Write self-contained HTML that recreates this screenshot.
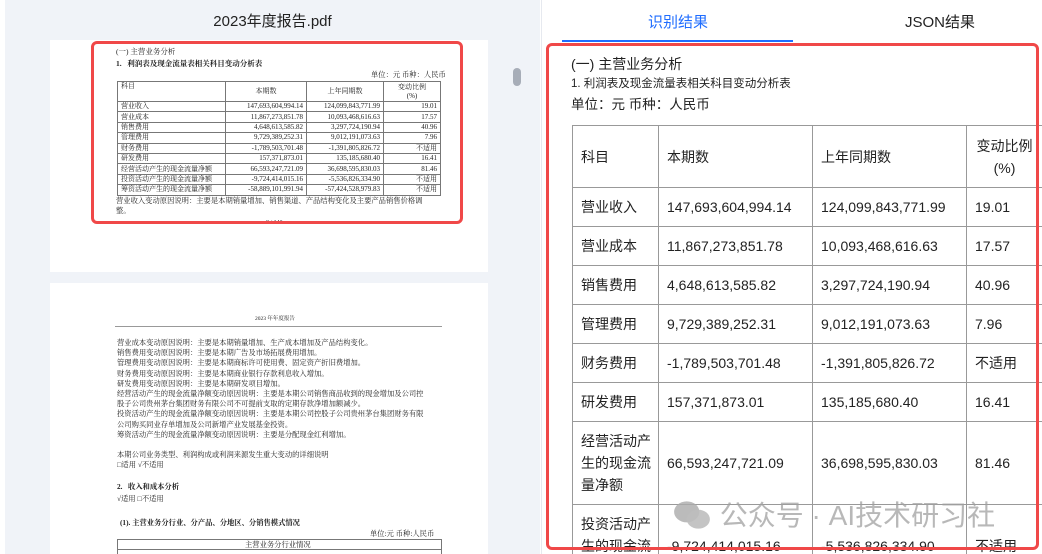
<!DOCTYPE html>
<html><head><meta charset="utf-8"><style>
*{margin:0;padding:0;box-sizing:border-box}
html,body{width:1042px;height:554px;overflow:hidden}
body{background:#fff;font-family:"Liberation Sans","Noto Sans CJK SC",sans-serif}
#wrap{position:relative;width:1042px;height:554px;overflow:hidden}
.left{position:absolute;left:5px;top:0;width:535px;height:554px;background:#f0f3f8;overflow:hidden}
.title{position:absolute;left:0;width:535px;top:10px;text-align:center;font-size:15px;color:#222}
.page{position:absolute;left:45px;width:438px;background:#fff;font-family:"Liberation Serif","Noto Serif CJK SC",serif;color:#222;overflow:hidden}
.p1{top:40px;height:232px}
.p2{top:283px;height:271px}
.pt{position:absolute;font-size:7.3px;white-space:nowrap}
.small{border-collapse:collapse;position:absolute;left:67px;top:41px;width:323px;font-size:7px;table-layout:fixed}
.small td{border:0.6px solid #777;padding:0 3px;height:10.4px;line-height:9px;white-space:nowrap;overflow:hidden}
.small td.r{text-align:right}
.red{position:absolute;border:3px solid #f04848;border-radius:6px}
.sb{position:absolute;left:508px;top:68px;width:8px;height:18px;border-radius:4px;background:#a7adb8}
.right{position:absolute;left:541px;top:0;width:501px;height:554px;background:#fff;border-left:1px solid #e6e9ef}
.tab{position:absolute;top:11px;font-size:15px}
.tbox{position:absolute;left:572px;top:125px;width:470px;height:429px;overflow:hidden}
.big{border-collapse:collapse;position:absolute;left:0;top:0;font-size:14px;color:#222;table-layout:fixed;width:490px}
.big td{border:1px solid #999;padding:0 8px;vertical-align:middle;line-height:22px;white-space:nowrap;overflow:hidden}
</style></head><body><div id="wrap">
<div class="left">
<div class="title">2023年度报告.pdf</div>
<div class="page p1">
<div class="pt" style="left:66px;top:6px;font-size:7.5px">(一) 主营业务分析</div>
<div class="pt" style="left:66px;top:18px;font-size:7.5px;font-weight:bold">1.&nbsp;&nbsp;&nbsp;利润表及现金流量表相关科目变动分析表</div>
<div class="pt" style="left:321px;top:30px">单位：元 币种：人民币</div>
<table class="small">
<col style="width:108px"><col style="width:81px"><col style="width:77px"><col style="width:57px">
<tr><td style="height:20px;vertical-align:top">科目</td><td style="text-align:center">本期数</td><td style="text-align:center">上年同期数</td><td style="text-align:center;line-height:9px">变动比例<br>(%)</td></tr>
<tr><td>营业收入</td><td class="r">147,693,604,994.14</td><td class="r">124,099,843,771.99</td><td class="r">19.01</td></tr>
<tr><td>营业成本</td><td class="r">11,867,273,851.78</td><td class="r">10,093,468,616.63</td><td class="r">17.57</td></tr>
<tr><td>销售费用</td><td class="r">4,648,613,585.82</td><td class="r">3,297,724,190.94</td><td class="r">40.96</td></tr>
<tr><td>管理费用</td><td class="r">9,729,389,252.31</td><td class="r">9,012,191,073.63</td><td class="r">7.96</td></tr>
<tr><td>财务费用</td><td class="r">-1,789,503,701.48</td><td class="r">-1,391,805,826.72</td><td class="r">不适用</td></tr>
<tr><td>研发费用</td><td class="r">157,371,873.01</td><td class="r">135,185,680.40</td><td class="r">16.41</td></tr>
<tr><td>经营活动产生的现金流量净额</td><td class="r">66,593,247,721.09</td><td class="r">36,698,595,830.03</td><td class="r">81.46</td></tr>
<tr><td>投资活动产生的现金流量净额</td><td class="r">-9,724,414,015.16</td><td class="r">-5,536,826,334.90</td><td class="r">不适用</td></tr>
<tr><td>筹资活动产生的现金流量净额</td><td class="r">-58,889,101,991.94</td><td class="r">-57,424,528,979.83</td><td class="r">不适用</td></tr>
</table>
<div class="pt" style="left:66px;top:156px">营业收入变动原因说明：主要是本期销量增加、销售渠道、产品结构变化及主要产品销售价格调</div>
<div class="pt" style="left:66px;top:166px">整。</div>
<div class="pt" style="left:216px;top:180px;font-size:6px">8 / 143</div>
</div>
<div class="page p2">
<div class="pt" style="left:205px;top:31px;font-size:5.5px">2023 年年度报告</div>
<div style="position:absolute;left:65px;top:43px;width:327px;height:1px;background:#999"></div>
<div class="pt" style="left:67px;top:55px;line-height:10.2px">营业成本变动原因说明：主要是本期销量增加、生产成本增加及产品结构变化。<br>销售费用变动原因说明：主要是本期广告及市场拓展费用增加。<br>管理费用变动原因说明：主要是本期商标许可使用费、固定资产折旧费增加。<br>财务费用变动原因说明：主要是本期商业银行存款利息收入增加。<br>研发费用变动原因说明：主要是本期研发项目增加。<br>经营活动产生的现金流量净额变动原因说明：主要是本期公司销售商品收到的现金增加及公司控<br>股子公司贵州茅台集团财务有限公司不可提前支取的定期存款净增加额减少。<br>投资活动产生的现金流量净额变动原因说明：主要是本期公司控股子公司贵州茅台集团财务有限<br>公司购买同业存单增加及公司新增产业发展基金投资。<br>筹资活动产生的现金流量净额变动原因说明：主要是分配现金红利增加。</div>
<div class="pt" style="left:67px;top:167px;line-height:10.2px">本期公司业务类型、利润构成或利润来源发生重大变动的详细说明<br>□适用 √不适用</div>
<div class="pt" style="left:67px;top:199px;font-weight:bold">2.&nbsp;&nbsp;&nbsp;收入和成本分析</div>
<div class="pt" style="left:67px;top:211px">√适用 □不适用</div>
<div class="pt" style="left:70px;top:235px;font-weight:bold">(1). 主营业务分行业、分产品、分地区、分销售模式情况</div>
<div class="pt" style="left:320px;top:246px">单位:元 币种:人民币</div>
<div style="position:absolute;left:67px;top:256px;width:325px;height:30px;border:0.6px solid #777"></div>
<div class="pt" style="left:195px;top:257px">主营业务分行业情况</div>
<div style="position:absolute;left:67px;top:266px;width:325px;height:1px;background:#777"></div>
</div>
<div class="sb"></div>
</div>
<div class="red" style="left:91px;top:41px;width:372px;height:183px"></div>
<div class="right">
<div class="tab" style="left:106px;color:#1f6dff">识别结果</div>
<div style="position:absolute;left:20px;top:40px;width:231px;height:2px;background:#1f6dff"></div>
<div class="tab" style="left:363px;color:#222">JSON结果</div>
</div>
<div style="position:absolute;left:571px;top:54px;font-size:14px;color:#222">(一) 主营业务分析</div>
<div style="position:absolute;left:571px;top:75px;font-size:11.5px;color:#222">1. 利润表及现金流量表相关科目变动分析表</div>
<div style="position:absolute;left:571px;top:93px;font-size:13.5px;color:#222">单位：元 币种：人民币</div>
<div class="tbox">
<table class="big">
<col style="width:86px"><col style="width:154px"><col style="width:154px"><col style="width:96px">
<tr><td style="height:62px">科目</td><td>本期数</td><td>上年同期数</td><td style="text-align:center;padding:0 20px 0 0">变动比例<br>(%)</td></tr>
<tr><td style="height:39px">营业收入</td><td>147,693,604,994.14</td><td>124,099,843,771.99</td><td>19.01</td></tr>
<tr><td style="height:39px">营业成本</td><td>11,867,273,851.78</td><td>10,093,468,616.63</td><td>17.57</td></tr>
<tr><td style="height:39px">销售费用</td><td>4,648,613,585.82</td><td>3,297,724,190.94</td><td>40.96</td></tr>
<tr><td style="height:39px">管理费用</td><td>9,729,389,252.31</td><td>9,012,191,073.63</td><td>7.96</td></tr>
<tr><td style="height:39px">财务费用</td><td>-1,789,503,701.48</td><td>-1,391,805,826.72</td><td>不适用</td></tr>
<tr><td style="height:39px">研发费用</td><td>157,371,873.01</td><td>135,185,680.40</td><td>16.41</td></tr>
<tr><td style="height:83px;padding-right:0">经营活动产<br>生的现金流<br>量净额</td><td>66,593,247,721.09</td><td>36,698,595,830.03</td><td>81.46</td></tr>
<tr><td style="height:83px;padding-right:0">投资活动产<br>生的现金流<br>量净额</td><td>-9,724,414,015.16</td><td>-5,536,826,334.90</td><td>不适用</td></tr>
</table>
</div>
<div style="position:absolute;left:672px;top:494px;font-size:28px;color:rgba(160,160,160,.75);white-space:nowrap">
<svg width="40" height="32" viewBox="0 0 38 30" style="vertical-align:-6px"><ellipse cx="14" cy="12" rx="12" ry="10" fill="rgba(170,170,170,.8)"/><ellipse cx="25" cy="19" rx="11" ry="9" fill="rgba(190,190,190,.9)"/></svg> 公众号 · AI技术研习社</div>
<div class="red" style="left:546px;top:43px;width:493px;height:507px"></div>
</div></body></html>
